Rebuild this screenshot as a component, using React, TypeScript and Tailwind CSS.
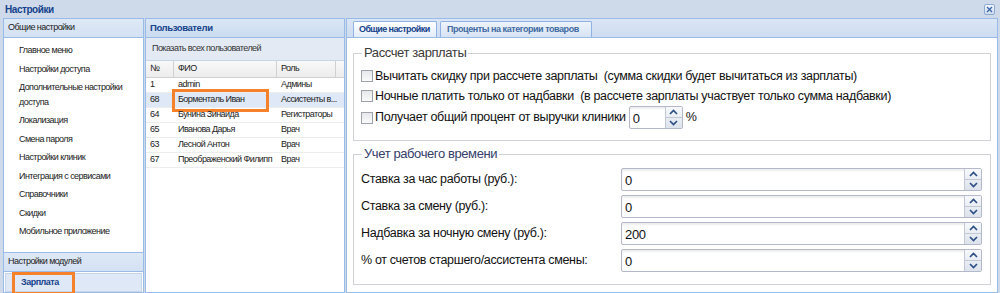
import React from "react";

function Spinner() {
  return (
    <div className="flex w-[17px] shrink-0 flex-col border-l border-[#c3c9d4] bg-gradient-to-b from-[#f6f8fb] to-[#dde3ec]">
      <div className="flex flex-1 items-center justify-center border-b border-[#c3c9d4]">
        <svg width="9" height="6" viewBox="0 0 9 6">
          <path d="M1 5 L4.5 1.5 L8 5" fill="none" stroke="#2d4f86" strokeWidth="1.7" />
        </svg>
      </div>
      <div className="flex flex-1 items-center justify-center">
        <svg width="9" height="6" viewBox="0 0 9 6">
          <path d="M1 1 L4.5 4.5 L8 1" fill="none" stroke="#2d4f86" strokeWidth="1.7" />
        </svg>
      </div>
    </div>
  );
}

function Box() {
  return (
    <span className="mr-[2px] h-[12px] w-[12px] shrink-0 border border-[#9ea3ab] bg-gradient-to-b from-[#e6e8ec] to-[#fafafa]" />
  );
}

function Check({ label }: { label: string }) {
  return (
    <div className="flex h-[20px] items-center">
      <Box />
      <span className="whitespace-pre">{label}</span>
    </div>
  );
}

const menu = [
  "Главное меню",
  "Настройки доступа",
  "Дополнительные настройки доступа",
  "Локализация",
  "Смена пароля",
  "Настройки клиник",
  "Интеграция с сервисами",
  "Справочники",
  "Скидки",
  "Мобильное приложение",
];

const users = [
  ["1", "admin", "Админы"],
  ["68", "Борменталь Иван", "Ассистенты в..."],
  ["64", "Бунина Зинаида", "Регистраторы"],
  ["65", "Иванова Дарья", "Врач"],
  ["63", "Лесной Антон", "Врач"],
  ["67", "Преображенский Филипп", "Врач"],
];

const work = [
  ["Ставка за час работы (руб.):", "0"],
  ["Ставка за смену (руб.):", "0"],
  ["Надбавка за ночную смену (руб.):", "200"],
  ["% от счетов старшего/ассистента смены:", "0"],
];

export default function App() {
  return (
    <div className="flex h-[293px] w-[1000px] flex-col overflow-hidden bg-[#cedaea] font-['Liberation_Sans',Arial,sans-serif]">
      {/* title bar */}
      <div className="flex h-[18px] shrink-0 items-center justify-between pl-[5px] pr-[5px]">
        <span className="text-[10px] font-bold tracking-[-0.45px] text-[#15428b]">Настройки</span>
        <span className="flex h-[11px] w-[11px] items-center justify-center rounded-[2px] border border-[#8eaad3] bg-gradient-to-b from-[#f2f6fc] to-[#cfdcef]">
          <svg width="7" height="7" viewBox="0 0 7 7">
            <path d="M1 1 L6 6 M6 1 L1 6" stroke="#3b66a8" strokeWidth="1.4" />
          </svg>
        </span>
      </div>

      <div className="flex min-h-0 flex-1 gap-[1px] pl-[3px] pr-[2px] text-[9px] tracking-[-0.55px]">
        {/* left panel */}
        <div className="flex w-[141px] shrink-0 flex-col border border-[#99bbe8] bg-white">
          <div className="flex h-[19px] shrink-0 items-center border-b border-[#99bbe8] bg-gradient-to-b from-[#dfe9f6] to-[#d3e1f3] pl-[4px] text-[#222]">
            Общие настройки
          </div>
          <div className="flex-1 pl-[15px] pr-[4px] pt-[3px] text-[#222]">
            {menu.map((m) => (
              <div key={m} className="py-[2px] leading-[14.5px]">
                {m}
              </div>
            ))}
          </div>
          <div className="flex h-[20px] shrink-0 items-center border-y border-[#99bbe8] bg-gradient-to-b from-[#dfe9f6] to-[#d3e1f3] pl-[4px] text-[#222]">
            Настройки модулей
          </div>
          <div className="px-[1px] pt-[1px]">
            <div className="relative flex h-[19px] items-center border border-[#c5d5ea] bg-[#dfe8f6] pl-[15px] font-bold tracking-[-0.5px] text-[#15428b]">
              Зарплата
              <div className="absolute left-[6px] top-[-2px] h-[23px] w-[63px] border-[3px] border-[#f5822a]" />
            </div>
          </div>
        </div>

        {/* users panel */}
        <div className="flex w-[200px] shrink-0 flex-col border border-[#99bbe8] bg-white">
          <div className="flex h-[19px] shrink-0 items-center border-b border-[#99bbe8] bg-gradient-to-b from-[#dae6f5] to-[#cbdcf1] pl-[4px] text-[9.5px] font-bold tracking-[-0.4px] text-[#15428b]">
            Пользователи
          </div>
          <div className="flex h-[23px] shrink-0 items-center border-b border-[#c6d4e6] bg-[#e3eaf3] pl-[6px] text-[#333]">
            Показать всех пользователей
          </div>
          <div className="flex h-[17px] shrink-0 border-b border-[#d0d0d0] bg-gradient-to-b from-[#f9f9f9] to-[#ececec] text-[#222]">
            <div className="flex w-[28px] items-center border-r border-[#d0d0d0] pl-[4px]">№</div>
            <div className="flex w-[103px] items-center border-r border-[#d0d0d0] pl-[4px]">ФИО</div>
            <div className="flex w-[59px] items-center border-r border-[#d0d0d0] pl-[4px]">Роль</div>
          </div>
          {users.map((u, i) => (
            <div
              key={u[0]}
              className={`flex h-[15px] shrink-0 whitespace-nowrap border-b border-[#ededed] text-[#222] ${i === 1 ? "bg-[#dfe8f6]" : "bg-white"}`}
            >
              <div className="flex w-[28px] items-center pl-[4px]">{u[0]}</div>
              <div className="relative flex w-[103px] items-center pl-[4px]">
                {u[1]}
                {i === 1 && (
                  <div className="absolute left-[-2px] top-[-4px] h-[23px] w-[97px] border-[3px] border-[#f5822a]" />
                )}
              </div>
              <div className="flex w-[60px] items-center overflow-hidden pl-[4px]">{u[2]}</div>
            </div>
          ))}
        </div>

        {/* right panel */}
        <div className="flex min-w-0 flex-1 flex-col border border-[#99bbe8] bg-white">
          <div className="flex h-[19px] shrink-0 items-end border-b border-[#99bbe8] bg-gradient-to-b from-[#dbe6f5] to-[#cddcf0] pl-[6px]">
            <div className="flex h-[16px] w-[84px] items-center rounded-t-[2px] border border-b-0 border-[#8db2e3] bg-gradient-to-b from-[#ffffff] to-[#e2ecf9] pl-[5px] font-bold tracking-[-0.6px] text-[#15428b]">
              Общие настройки
            </div>
            <div className="ml-[3px] flex h-[16px] w-[152px] items-center rounded-t-[2px] border border-b-0 border-[#8db2e3] bg-gradient-to-b from-[#eef3fb] to-[#d6e3f4] pl-[6px] font-bold tracking-[-0.45px] text-[#416aa3]">
              Проценты на категории товаров
            </div>
          </div>
          <div className="min-h-0 flex-1 px-[6px] text-[12.5px] tracking-[-0.33px] text-[#111]">
            <fieldset className="mt-[7px] border border-[#cfcfd6] pb-[11px] pl-[7px] pt-[5px]">
              <legend className="ml-[1px] px-[2px] text-[13px] leading-[16px] tracking-[-0.4px] text-[#3a3a3a]">Рассчет зарплаты</legend>
              <Check label="Вычитать скидку при рассчете зарплаты  (сумма скидки будет вычитаться из зарплаты)" />
              <Check label="Ночные платить только от надбавки  (в рассчете зарплаты участвует только сумма надбавки)" />
              <div className="flex h-[23px] items-center">
                <Box />
                <span>Получает общий процент от выручки клиники</span>
                <div className="ml-[3px] flex h-[23px] w-[54px] shrink-0 rounded-[2px] border border-[#b5b8c8] bg-white shadow-[inset_0_2px_2px_rgba(0,0,0,0.07)]">
                  <div className="flex-1 pl-[3px] pt-[3px] text-[13px] leading-[18px]">0</div>
                  <Spinner />
                </div>
                <span className="ml-[3px]">%</span>
              </div>
            </fieldset>
            <fieldset className="mt-[5px] border border-[#cfcfd6] pb-[12px] pl-[7px] pr-[8px] pt-[6px]">
              <legend className="ml-[1px] px-[2px] text-[13px] leading-[16px] tracking-[-0.4px] text-[#34406a]">Учет рабочего времени</legend>
              <div className="flex flex-col gap-[4px]">
                {work.map((r) => (
                  <div key={r[0]} className="flex h-[23px] items-center">
                    <span className="w-[260px] shrink-0">{r[0]}</span>
                    <div className="flex-1">
                      <div className="flex h-[23px] rounded-[2px] border border-[#b5b8c8] bg-white shadow-[inset_0_2px_2px_rgba(0,0,0,0.07)]">
                        <div className="flex-1 pl-[3px] pt-[3px] text-[13px] leading-[18px]">{r[1]}</div>
                        <Spinner />
                      </div>
                    </div>
                  </div>
                ))}
              </div>
            </fieldset>
          </div>
        </div>
      </div>
    </div>
  );
}
